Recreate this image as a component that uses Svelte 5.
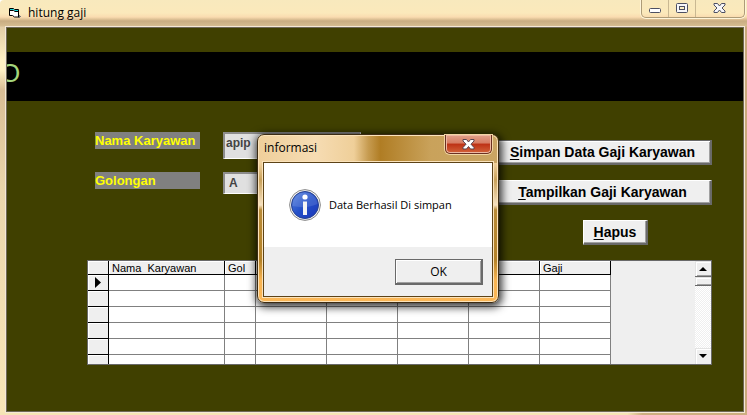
<script>
  let nama = $state('apip');
  let golongan = $state(' A');
  const rows = [0, 1, 2, 3, 4, 5];
  const columns = ['Nama  Karyawan', 'Gol', '', '', '', '', 'Gaji'];
</script>

<main class="window">
  <header class="titlebar">
    <svg class="appicon" width="14" height="12" viewBox="0 0 14 12" aria-hidden="true">
      <path d="M10 8h2v1h1v1h-1v1h-2z" fill="#777" />
      <path d="M1.500 1.500h4l1 1h4v7.500h-4l-2-1.500h-3z" fill="#fff" stroke="#000" />
      <path d="M2 2h3.500l1 1H10v1H7L5.500 3H2z" fill="#19d5d9" />
      <path d="M2 3.500h3.500l1.500 1h3" fill="none" stroke="#000" />
    </svg>
    <h1>hitung gaji</h1>
    <div class="controls">
      <button aria-label="Minimize">
        <svg width="13" height="16" viewBox="0 0 13 16"><rect x="0.500" y="8.500" width="11" height="4" rx="1" fill="#fff" stroke="#4c4f63" /></svg>
      </button>
      <button aria-label="Maximize">
        <svg width="13" height="16" viewBox="0 0 13 16"><rect x="0.500" y="3.500" width="11" height="9" rx="1" fill="#f7f7fa" stroke="#4c4f63" /><rect x="3.500" y="6.500" width="5" height="3" fill="#fdf0c8" stroke="#4c4f63" /></svg>
      </button>
      <button class="wide" aria-label="Close">
        <svg width="13" height="16" viewBox="0 0 13 16"><path d="M1 3.500h3.500l2 2.500 2-2.500H12v1.500L9 8l3 3v1.500H8.500l-2-2.500-2 2.500H1V11l3-3-3-3z" fill="#f7f7fa" stroke="#4c4f63" /></svg>
      </button>
    </div>
  </header>

  <div class="client">
    <div class="banner">O</div>
    <form class="form" onsubmit={(e) => e.preventDefault()}>
      <div class="fields">
        <div class="field">
          <label for="nama">Nama Karyawan</label>
          <input id="nama" class="tall" bind:value={nama} />
        </div>
        <div class="field">
          <label for="golongan">Golongan</label>
          <input id="golongan" bind:value={golongan} />
        </div>
      </div>
      <div class="actions">
        <button class="btn default"><u>S</u>impan Data Gaji Karyawan</button>
        <button class="btn"><u>T</u>ampilkan Gaji Karyawan</button>
        <button class="btn small"><u>H</u>apus</button>
      </div>
    </form>

    <div class="grid">
      <div class="tablebox">
        <table>
          <colgroup>
            <col class="c0" /><col class="c1" /><col class="c2" /><col class="c3" /><col class="c3" /><col class="c3" /><col class="c3" /><col class="c3" />
          </colgroup>
          <thead>
            <tr>
              <th></th>
              {#each columns as c}<th><span>{c}</span></th>{/each}
            </tr>
          </thead>
          <tbody>
            {#each rows as r}
              <tr>
                <th>
                  {#if r === 0}
                    <svg width="6" height="11" viewBox="0 0 6 11" aria-hidden="true"><path d="M0 0l6 5.500-6 5.500z" fill="#000" /></svg>
                  {/if}
                </th>
                {#each columns as _}<td></td>{/each}
              </tr>
            {/each}
          </tbody>
        </table>
      </div>
      <div class="scroll">
        <button class="up" aria-label="Scroll up"><svg width="8" height="4" viewBox="0 0 8 4"><path d="M4 0l4 4H0z" /></svg></button>
        <div class="thumb"></div>
        <div class="track"></div>
        <button class="down" aria-label="Scroll down"><svg width="8" height="4" viewBox="0 0 8 4"><path d="M4 4l4-4H0z" /></svg></button>
      </div>
    </div>
  </div>

  <div class="dialog" role="dialog" aria-labelledby="dlg-title">
    <div class="dlg-head">
      <h2 id="dlg-title">informasi</h2>
      <button class="dlg-close" aria-label="Close">
        <svg width="13" height="11" viewBox="0 0 13 11"><path d="M1 .5h3.500l2 2.500 2-2.500H12V2L9 5.200l3 3.300V10H8.500l-2-2.500-2 2.500H1V8.500l3-3.300L1 2z" fill="#fff" stroke="#574450" /></svg>
      </button>
    </div>
    <div class="dlg-body">
      <div class="message">
        <svg width="32" height="32" viewBox="0 0 32 32" aria-hidden="true">
          <defs>
            <linearGradient id="blue" x1="0" y1="0" x2="1" y2="1">
              <stop offset="0" stop-color="#5b86e0" />
              <stop offset=".5" stop-color="#2450c8" />
              <stop offset="1" stop-color="#1b35b8" />
            </linearGradient>
          </defs>
          <circle cx="16" cy="16" r="15.400" fill="#f2f2f2" stroke="#8a8a8a" stroke-width="1" />
          <circle cx="16" cy="16" r="13.500" fill="url(#blue)" stroke="#27418f" />
          <path d="M3.500 17a12.500 12.500 0 0 1 25-2Q18 20 3.500 17z" fill="#fff" opacity=".12" />
          <circle cx="16" cy="8" r="2.600" fill="#fff" />
          <path d="M14 12.500h4V26h-4z" fill="#f4f4f4" />
        </svg>
        <p>Data Berhasil Di simpan</p>
      </div>
      <div class="dlg-foot"><button class="ok">OK</button></div>
    </div>
  </div>
</main>

<style>
  :global(body) { margin: 0; }
  * { box-sizing: border-box; }
  button { font: inherit; margin: 0; padding: 0; border: 0; color: #000; }
  h1, h2, p { margin: 0; font-size: 12px; font-weight: 400; line-height: 16px; }
  .window {
    position: relative;
    display: flex;
    flex-direction: column;
    min-height: 100vh;
    padding: 0 2px 2px 5px;
    font-family: "Open Sans", "Noto Sans", sans-serif;
    font-size: 12px;
    color: #000;
    background:
      linear-gradient(#f8e9bd 0, #fbe9bb 13px, #fadcb0 17px, #c9ad82 21px, #d5bc90 26px, transparent 27px) top / 100% 27px no-repeat,
      linear-gradient(90deg, #f5e4b5 84%, #cdae80 86%) bottom / 100% 3px no-repeat,
      linear-gradient(90deg, transparent 50%, #c9a87b 50%),
      linear-gradient(#e2cda6 27px, #fff0c4 60px, #fff0c4 70px, #d8bd94 90px, #ead6ac 190px, #f8e6b8 100%);
    border-top-left-radius: 4px;
  }
  .titlebar { display: flex; height: 26px; padding-left: 3px; }
  .appicon { margin-top: 7px; }
  h1 { margin: 5px 0 0 6px; }
  .controls {
    display: flex;
    height: 18px;
    margin-left: auto;
    padding-right: 1px;
    border: 1px solid #ad9c78;
    border-top: 0;
    border-radius: 0 0 5px 5px;
    box-shadow: 0 0 0 1px #fff5d9;
  }
  .controls button { display: flex; justify-content: center; width: 27px; background: none; border-right: 1px solid #c9b892; }
  .controls .wide { width: 47px; border: 0; }
  .client {
    flex: 1;
    border: 1px solid #6f6857;
    outline: 1px solid #f4e8d6;
    margin: 1px 1px 1px;
    background: #404000;
  }
  .banner {
    height: 49px;
    margin-top: 24px;
    overflow: hidden;
    background: #000;
    color: #a4d67c;
    font: 26px/43px "Liberation Sans", Arial, sans-serif;
    text-indent: -7px;
  }
  .form {
    display: flex;
    justify-content: space-between;
    height: 159px;
    padding: 31px 31px 0 88px;
    font: bold 13px/17px "Liberation Sans", Arial, sans-serif;
  }
  .field { display: flex; align-items: flex-start; height: 40px; gap: 23px; }
  label { width: 105px; height: 17px; background: #808080; color: #ff0; white-space: nowrap; }
  input {
    width: 138px;
    height: 22px;
    padding: 0 1px 1px;
    border: 1px solid #fff;
    border-top: 2px solid #8c8c8c;
    border-left: 2px solid #8c8c8c;
    border-radius: 0;
    outline: 0;
    background: #e0e0e0;
    color: #444;
    font: bold 12px/14px "Liberation Sans", Arial, sans-serif;
  }
  input.tall { height: 27px; padding-bottom: 7px; }
  .actions { display: flex; flex-direction: column; gap: 15px; width: 218px; padding-top: 8px; }
  .btn {
    height: 25px;
    font: bold 14px/21px "Liberation Sans", Arial, sans-serif;
    background: #efefef;
    border: 1px solid #fff;
    border-right: 2px solid #696969;
    border-bottom: 2px solid #696969;
    box-shadow: inset -1px -1px #a0a0a0;
    white-space: nowrap;
  }
  .default { border-top-color: #696969; box-shadow: inset 0 1px #fff, inset -1px -1px #a0a0a0; }
  .small { width: 65px; margin-left: 89px; }
  u { text-underline-offset: 2px; }
  .grid {
    display: flex;
    height: 105px;
    margin: 0 31px 46px 80px;
    border: 1px solid #696969;
    background: #efefef;
  }
  .tablebox { flex: 1; overflow: hidden; }
  table { table-layout: fixed; width: 523px; border-collapse: separate; border-spacing: 0; font: 11px/13px "Liberation Sans", Arial, sans-serif; }
  .c0 { width: 21px; }
  .c1 { width: 116px; }
  .c2 { width: 31px; }
  .c3 { width: 71px; }
  th, td { height: 16px; padding: 0; background: #fff; border: solid #808080; border-width: 0 1px 1px 0; }
  th { background: #efefef; border-color: #000; font-weight: 400; text-align: left; box-shadow: inset 1px 1px #fff; }
  tbody th { line-height: 0; padding-left: 7px; }
  thead th { height: 14px; }
  thead span { display: block; height: 13px; padding: 1px 0 0 3px; overflow: hidden; white-space: pre; }
  .scroll { display: flex; flex-direction: column; width: 16px; }
  .scroll button, .thumb {
    display: flex;
    align-items: center;
    justify-content: center;
    height: 16px;
    background: #efefef;
    border-bottom: 1px solid #696969;
    box-shadow: inset 1px 1px #e3e3e3, inset 2px 2px #fff, inset 0 -1px #a0a0a0;
  }
  .scroll .thumb { height: 9px; }
  .scroll .down { border: 0; box-shadow: inset 1px 1px #e3e3e3, inset 2px 2px #fff; }
  .track { flex: 1; background: repeating-conic-gradient(#fff 0 25%, #efefef 0 50%) 0 0 / 2px 2px; }
  .dialog {
    position: absolute;
    top: 134px;
    left: 257px;
    width: 242px;
    padding: 0 6px 6px;
    border: 1px solid #3c2b12;
    border-radius: 7px;
    background:
      linear-gradient(90deg, #efcf9b, #f6dcb3 24%, #efcf99 40%, #c69b50 46%, #b07d24 51%, #c9a25b 72%, #caa563) top / 100% 28px no-repeat,
      linear-gradient(#f0d09c 28px, #c9a15a 45px, #f6e2c2 70px, #b98b38 75px, #b58228 125px, #f8b452 145px, #fbb757 100%);
    box-shadow: inset 0 0 0 1px #fbe3bb, 1px 2px 8px 2px rgba(0, 0, 0, .8);
  }
  .dlg-head { display: flex; justify-content: space-between; height: 28px; }
  h2 { margin-top: 5px; }
  .dlg-close {
    display: flex;
    align-items: center;
    justify-content: center;
    width: 47px;
    height: 19px;
    border: 1px solid #6a3022;
    border-top: 0;
    border-radius: 0 0 5px 5px;
    background: linear-gradient(#e2a18a, #d67c63 45%, #bd3115 50%, #d3633a);
    box-shadow: inset 0 0 0 1px #edb8a2, 0 0 0 1px #f2d5a4;
  }
  .dlg-body { outline: 1px solid #5d4317; box-shadow: 0 0 0 2px #fbe3bb; background: #fff; }
  .message { display: flex; align-items: center; gap: 8px; height: 84px; padding-left: 25px; }
  .message p { font-size: 11px; }
  .dlg-foot { display: flex; justify-content: flex-end; padding: 12px 9px 11px; background: #efefef; }
  .ok {
    width: 88px;
    height: 26px;
    background: #efefef;
    border: 1px solid #696969;
    border-right-width: 2px;
    border-bottom-width: 2px;
    box-shadow: inset 1px 1px #fff, inset -1px -1px #a0a0a0;
  }
</style>
